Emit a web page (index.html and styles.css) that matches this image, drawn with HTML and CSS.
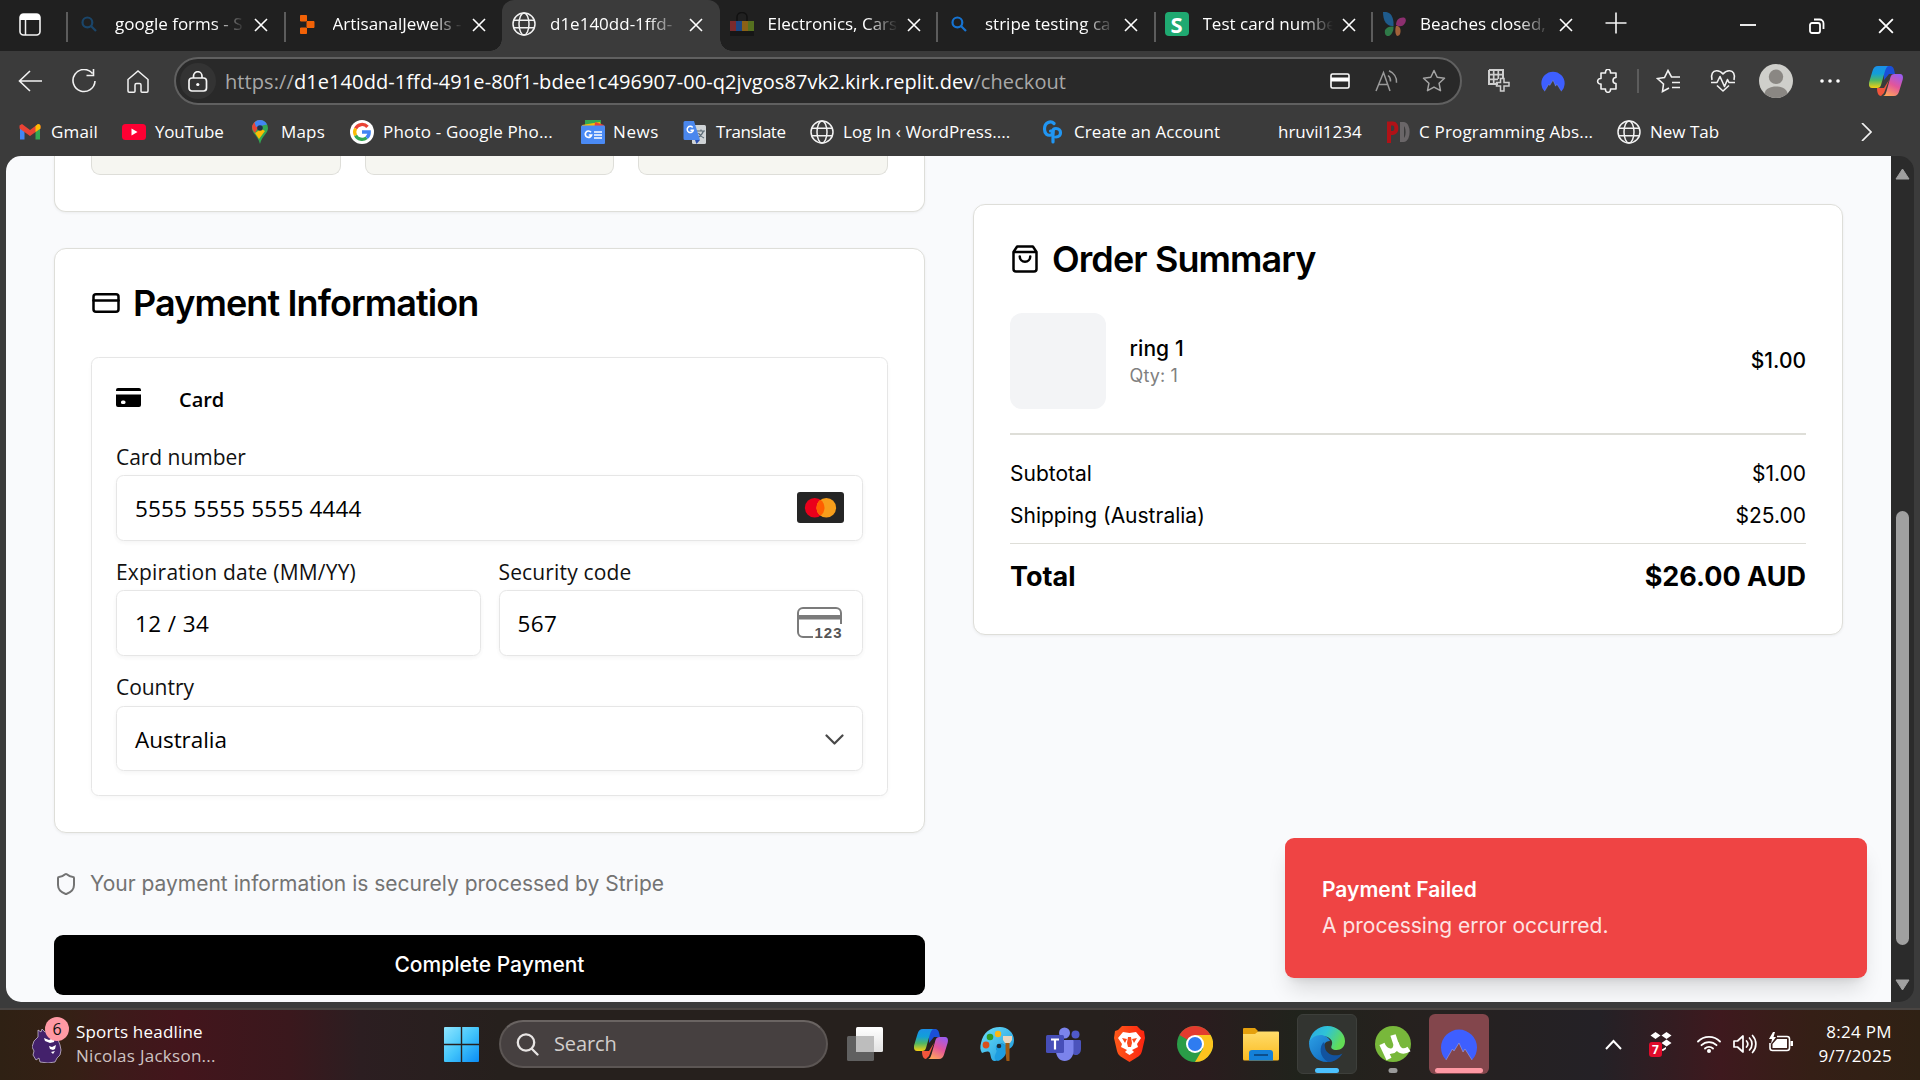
FILE: index.html
```html
<!DOCTYPE html>
<html lang="en">
<head>
<meta charset="utf-8">
<title>Checkout</title>
<link rel="stylesheet" href="styles.css">
</head>
<body>
<svg class="defs" aria-hidden="true">
  <defs>
    <linearGradient id="cp-a" x1="0" y1="0" x2="0" y2="1"><stop offset="0" stop-color="#1b8fe8"/><stop offset=".35" stop-color="#129fd8"/><stop offset=".65" stop-color="#4fb765"/><stop offset="1" stop-color="#f5d011"/></linearGradient>
    <linearGradient id="cp-b" x1=".8" y1="0" x2=".3" y2="1"><stop offset="0" stop-color="#9a5cf0"/><stop offset=".5" stop-color="#e2559b"/><stop offset="1" stop-color="#ffa45c"/></linearGradient>
    <linearGradient id="win" x1="0" y1="0" x2="1" y2="1"><stop offset="0" stop-color="#8fe6ff"/><stop offset=".5" stop-color="#43c5fb"/><stop offset="1" stop-color="#0a8cf5"/></linearGradient>
    <linearGradient id="edge-a" x1="0" y1="0" x2="1" y2=".4"><stop offset="0" stop-color="#2aa7e8"/><stop offset=".5" stop-color="#2fc3d6"/><stop offset="1" stop-color="#62dc55"/></linearGradient>
    <linearGradient id="edge-b" x1="0" y1="0" x2="1" y2="1"><stop offset="0" stop-color="#2c9fe4"/><stop offset="1" stop-color="#0b5fb8"/></linearGradient>
    <linearGradient id="folder" x1="0" y1="0" x2="0" y2="1"><stop offset="0" stop-color="#ffdc6b"/><stop offset="1" stop-color="#fbbb20"/></linearGradient>
    <linearGradient id="pal" x1="0" y1="0" x2="1" y2="1"><stop offset="0" stop-color="#6ee0fa"/><stop offset="1" stop-color="#1796dc"/></linearGradient>
    <linearGradient id="brave" x1="0" y1="0" x2="1" y2="0"><stop offset="0" stop-color="#ff5a1a"/><stop offset="1" stop-color="#fb2410"/></linearGradient>
    <linearGradient id="tv" x1="0" y1="0" x2="0" y2="1"><stop offset="0" stop-color="#fff"/><stop offset="1" stop-color="#e2e2e2"/></linearGradient>
  </defs>
  <symbol id="x" viewBox="0 0 14 14"><path d="M1 1l12 12M13 1L1 13" fill="none" stroke="#fff" stroke-width="1.6"/></symbol>
  <symbol id="globe" viewBox="0 0 24 24"><g fill="none" stroke="#f2f2f2" stroke-width="1.5"><circle cx="12" cy="12" r="11"/><ellipse cx="12" cy="12" rx="5" ry="11"/><path d="M2 8.3h20M2 15.7h20"/></g></symbol>
  <symbol id="find" viewBox="0 0 16 16"><g fill="none" stroke="currentColor" stroke-width="2.2"><circle cx="6.4" cy="6.4" r="4.9"/><path d="M10 10l5 5"/></g></symbol>
  <symbol id="copilot" viewBox="0 0 34 30">
    <path d="M15 0h6c3 0 4 2 5 8h-6l-5 6z" fill="#1b4fd6"/>
    <path d="M8 22h7l5-8-5 13-3 3c-3 0-4-4-4-8z" fill="#f2553c"/>
    <path d="M9 0h11c-2 0-3 2-4 5l-4 14c-.6 2-1.500 3-4 3H3c-3 0-3.500-3-2.800-6L3.500 5C4.500 1.800 6 0 9 0z" fill="url(#cp-a)"/>
    <path d="M25 30H13c3 0 3.600-2 4.600-5L21.500 11c.7-2 1.700-3 4-3H31c3 0 3.400 3 2.600 6l-3.400 11c-1 3.200-2.500 5-5.200 5z" fill="url(#cp-b)"/>
  </symbol>
  <symbol id="peak" viewBox="0 0 36 34"><path d="M5 33A18 18 0 1 1 31 33L24 22l-2 3-4-9-5 8-1.500-2z" fill="#3e5fff"/><path d="M5 33l6.500-11 1.500 2 5-8 4 9 2-3 7 11" fill="none" stroke="#b9c6ff" stroke-width=".8" opacity=".5"/></symbol>
</svg>

<header class="tabs">
  <div class="tab-menu"><svg width="22" height="23" viewBox="0 0 22 23"><rect x="1" y="1" width="20" height="21" rx="3.500" fill="none" stroke="#f2f2f2" stroke-width="1.600"/><path d="M1 7V4a3 3 0 0 1 3-3h14a3 3 0 0 1 3 3v3z" fill="#fff"/><path d="M6.500 7v15" stroke="#f2f2f2" stroke-width="1.500"/></svg></div>
  <div class="tab"><span class="fav dim"><svg width="16" height="16"><use href="#find"/></svg></span><span class="label">google forms - S</span><svg class="close"><use href="#x"/></svg></div>
  <div class="tab"><span class="fav"><svg width="16" height="19" viewBox="0 0 16 19"><path d="M1.500 .5h6v5.500h-6zM8 6.500h7v6H8zM1.500 13h6v5.500h-6z" fill="#f26207" stroke="#f26207" stroke-linejoin="round"/></svg></span><span class="label">ArtisanalJewels -</span><svg class="close"><use href="#x"/></svg></div>
  <div class="tab active"><span class="fav"><svg width="24" height="24"><use href="#globe"/></svg></span><span class="label">d1e140dd-1ffd-</span><svg class="close"><use href="#x"/></svg></div>
  <div class="tab after"><span class="fav"><svg width="24" height="24" viewBox="0 0 24 24"><path d="M7 9V5a5 4.500 0 0 1 10 0v4" fill="none" stroke="#111" stroke-width="1.500"/><path d="M0 9h24v15H0z" fill="#161616"/><path d="M0 9h6v10H0z" fill="#7b2a2c"/><path d="M6 9h6v10H6z" fill="#1c4682"/><path d="M12 9h6v10h-6z" fill="#8a6116"/><path d="M18 9h6v10h-6z" fill="#55701f"/></svg></span><span class="label">Electronics, Cars</span><svg class="close"><use href="#x"/></svg></div>
  <div class="tab"><span class="fav blue"><svg width="16" height="16"><use href="#find"/></svg></span><span class="label">stripe testing ca</span><svg class="close"><use href="#x"/></svg></div>
  <div class="tab"><span class="fav stripe">S</span><span class="label">Test card numbe</span><svg class="close"><use href="#x"/></svg></div>
  <div class="tab"><span class="fav"><svg width="24" height="24" viewBox="0 0 24 24"><path d="M1 0c7-1 11 4 10.500 14C5 15 1 9 1 0z" fill="#1f5b8c"/><path d="M3 18c2-3 5-4 8.500-3.500C12 20 8 25 5 24c-2-1-2.500-3-2-6z" fill="#2f7a48"/><path d="M14 13c0-5 3-8 8-7.500 3 1 2 6-1 8-2 1.300-5 1-7-.5z" fill="#8c2f6f"/><path d="M14 14c3-.5 5 2 4.500 6-.3 3-2 4-3.500 4-2-2-2-7-1-10z" fill="#a2623a"/></svg></span><span class="label">Beaches closed,</span><svg class="close"><use href="#x"/></svg></div>
  <div class="new-tab"><svg width="22" height="22" viewBox="0 0 22 22"><path d="M11 .5v21M.5 11h21" stroke="#f5f5f5" stroke-width="1.600"/></svg></div>
  <div class="window-buttons">
    <svg width="16" height="16" viewBox="0 0 16 16"><path d="M0 7h16" stroke="#fff" stroke-width="1.800"/></svg>
    <svg width="16" height="16" viewBox="0 0 16 16"><g fill="none" stroke="#fff" stroke-width="1.800"><rect x="1" y="5" width="10" height="10" rx="2"/><path d="M5 1.500h5.500a4 4 0 0 1 4 4V11"/></g></svg>
    <svg width="16" height="16"><use href="#x"/></svg>
  </div>
</header>

<nav class="toolbar">
  <div class="nav-buttons">
    <svg width="24" height="22" viewBox="0 0 24 22"><path d="M24 11H1.500M12 1L1.500 11 12 21" fill="none" stroke="#f2f2f2" stroke-width="1.600"/></svg>
    <svg width="24" height="24" viewBox="0 0 24 24"><path d="M20.500 4.500A11 11 0 1 0 23 12M21.500 0v6.500h-7" fill="none" stroke="#f2f2f2" stroke-width="1.600"/></svg>
    <svg width="22" height="23" viewBox="0 0 22 23"><path d="M1 9.500L11 1l10 8.500V21c0 .8-.5 1.200-1.200 1.200H15c-.7 0-1-.4-1-1V15c0-1-.5-1.500-1.500-1.500h-3C8.500 13.500 8 14 8 15v6.200c0 .6-.3 1-1 1H2.200C1.500 22.200 1 21.800 1 21z" fill="none" stroke="#f2f2f2" stroke-width="1.500"/></svg>
  </div>
  <div class="address">
    <span class="lock"><svg width="20" height="21" viewBox="0 0 20 21"><g fill="none" stroke="#f5f5f5" stroke-width="1.700"><rect x="1" y="7" width="17.500" height="13" rx="3"/><path d="M5.500 7V5a4.200 4.200 0 0 1 8.500 0v2"/></g><circle cx="9.800" cy="13.500" r="1.600" fill="#fff"/></svg></span>
    <span class="url"><i>https://</i>d1e140dd-1ffd-491e-80f1-bdee1c496907-00-q2jvgos87vk2.kirk.replit.dev<i>/checkout</i></span>
    <span class="address-icons">
      <svg width="20" height="16" viewBox="0 0 20 16"><rect x="1" y="1" width="18" height="14" rx="1.500" fill="none" stroke="#fff" stroke-width="1.600"/><path d="M1 4.500h18v4H1z" fill="#fff"/></svg>
      <svg width="24" height="22" viewBox="0 0 24 22"><path d="M1 21L8.500 2.500 15 21M3.700 14.500h9M13 5.500c2 1.500 2.800 3.500 2.500 6M14 .8c4.500 2 8 6.500 7.500 12" fill="none" stroke="#9a9a9a" stroke-width="1.500"/></svg>
      <svg width="24" height="24" viewBox="0 0 24 24"><path d="M12 1.500l3.200 6.800 7.300.9-5.400 5.100 1.400 7.400L12 18.100l-6.500 3.600 1.400-7.400L1.500 9.200l7.300-.9z" fill="none" stroke="#a5a5a5" stroke-width="1.500" stroke-linejoin="round"/></svg>
    </span>
  </div>
  <div class="tools">
    <svg width="24" height="24" viewBox="0 0 24 24"><path d="M2 1h14v9M2 1v14h9" fill="none" stroke="#cfcfcf" stroke-width="2"/><path d="M2 5.700h14M2 10.300h9M6.700 1v14M11.300 1v9" stroke="#cfcfcf" stroke-width="1.700"/><path d="M13.500 9.500h3.500v4h5v3.500h-5v5h-3.500v-5h-4v-3.500h4z" fill="none" stroke="#cfcfcf" stroke-width="1.500"/></svg>
    <svg width="24" height="22"><use href="#peak"/></svg>
    <svg width="24" height="24" viewBox="0 0 24 24"><path d="M5 4h4.500c-.5-5 5.500-5 5 0H20v4.500c-4 0-4 6 0 6V20h-5.500c.5 4.500-5.500 4.500-5 0H5v-5c-4.500.5-4.500-6 0-5.500z" fill="none" stroke="#f2f2f2" stroke-width="1.600" stroke-linejoin="round"/></svg>
    <span class="tool-rule"></span>
    <svg width="25" height="24" viewBox="0 0 25 24"><path d="M13 19l-6.500 3.500 1-7.500L1.500 9.500l7-1L12 1.500l3.500 6.500H24M16 13.500h8M16 18.500h8" fill="none" stroke="#f2f2f2" stroke-width="1.600"/></svg>
    <svg width="26" height="24" viewBox="0 0 26 24"><path d="M2 11C.5 5 3 2 6.500 1.800 9 1.700 11 2.500 13 5c2-2.500 4-3.300 6.500-3.200C23 2 25.500 5 24 11M7 16.500l6 5.500 6-5.500M1 13.500h6l3-6 4.500 10 3-7 1.500 3h6" fill="none" stroke="#f2f2f2" stroke-width="1.600" stroke-linejoin="round"/></svg>
    <svg width="34" height="34" viewBox="0 0 34 34"><circle cx="17" cy="17" r="17" fill="#cfcfcb"/><circle cx="17" cy="12.800" r="7.200" fill="#8a8783"/><path d="M5.500 29.500c1-5 6-7 11.500-7s10.500 2 11.500 7a17 17 0 0 1-23 0z" fill="#8a8783"/></svg>
    <svg width="20" height="4" viewBox="0 0 20 4"><g fill="#fff"><circle cx="2" cy="2" r="1.800"/><circle cx="10" cy="2" r="1.800"/><circle cx="18" cy="2" r="1.800"/></g></svg>
    <svg width="34" height="30"><use href="#copilot"/></svg>
  </div>
</nav>

<nav class="bookmarks">
  <a><svg viewBox="0 0 24 24"><path d="M2 6v13.500h4.500V9z" fill="#4285f4"/><path d="M22 6v13.500h-4.500V9z" fill="#34a853"/><path d="M1.500 5.500L4 4l8 6 8-6 2.500 1.500v3L12 16 1.500 8.500z" fill="#ea4335"/><path d="M17.500 6L20 4c1.500 0 2.500.8 2.500 2.500v2L17.500 12z" fill="#fbbc04"/></svg>Gmail</a>
  <a class="tight"><svg viewBox="0 0 24 24"><rect y="4" width="24" height="16" rx="3.500" fill="#ff0033"/><path d="M9.500 8.500l6 3.500-6 3.500z" fill="#fff"/></svg>YouTube</a>
  <a><svg viewBox="0 0 24 24"><path d="M12 0a8 8 0 0 1 8 8.300c0 5-6 7.700-8 15.700-2-8-8-10.700-8-15.700A8 8 0 0 1 12 0z" fill="#34a853"/><path d="M4.500 5A8 8 0 0 1 14 .4L7 13C5 11 3.300 8 4.500 5z" fill="#ea4335"/><path d="M12 0a8 8 0 0 1 7 4.500L8 7 6.500 2.500C8 .8 10 0 12 0z" fill="#4285f4"/><path d="M7 13c2-1 4.500-3 5-5l5 3-6 8z" fill="#fbbc04"/><circle cx="12" cy="8" r="2.800" fill="#20304a"/></svg>Maps</a>
  <a><svg viewBox="0 0 24 24"><circle cx="12" cy="12" r="12" fill="#fff"/><g fill="none" stroke-width="3.300"><path d="M17.500 6.800A7.300 7.300 0 0 0 5.600 8.500" stroke="#ea4335"/><path d="M5.600 8.500a7.300 7.300 0 0 0 0 7" stroke="#fbbc04"/><path d="M5.600 15.500A7.300 7.300 0 0 0 16.600 17.800" stroke="#34a853"/><path d="M16.600 17.800A7 7 0 0 0 19.200 12H12" stroke="#4285f4"/></g></svg>Photo - Google Pho...</a>
  <a class="wide"><svg viewBox="0 0 24 24"><path d="M4 0h16v8H4z" fill="#34a853"/><path d="M1 5l18-3 2 8H2z" fill="#fbbc04"/><path d="M14 2l9 3-2 6h-8z" fill="#ea4335"/><rect y="5.500" width="24" height="18.500" rx="1" fill="#4a8af4"/><path d="M10 12.200a3.200 3.200 0 1 0 .6 2.800H7.800M13 12h8M13 15h8M13 18h8" fill="none" stroke="#fff" stroke-width="1.700"/></svg>News</a>
  <a class="tighter"><svg viewBox="0 0 24 24"><rect x="9" y="5" width="14" height="19" rx="1.500" fill="#cfd3d6"/><path d="M14 11h8M18 9.500V11M20.500 11c-1 3-3 5-5.500 6.500M15.500 13c1 2 3 4 5.500 5" fill="none" stroke="#5b6a75" stroke-width="1.200"/><path d="M2 1h9l6 19H2a1.500 1.500 0 0 1-1.500-1.500v-16A1.500 1.500 0 0 1 2 1z" fill="#4a87ee"/><path d="M12 20h5l-3.500 4z" fill="#2a4fb0"/><path d="M9.700 7.500a3.100 3.100 0 1 0 .6 2.700H7.500" fill="none" stroke="#fff" stroke-width="1.500"/></svg>Translate</a>
  <a class="login"><svg viewBox="0 0 24 24"><use href="#globe"/></svg>Log In ‹ WordPress....</a>
  <a class="login"><svg viewBox="0 0 24 24"><g fill="none" stroke="#2196f3" stroke-width="3.200" stroke-linecap="round"><path d="M13 3.500C10 .5 3.500 2 3.500 9c0 5 3 7 6.500 6 1.500-.6 2-1.500 2-4H9.500"/><path d="M12 22V11c0-2 1-2.500 3-2.500 6 0 6 8.500 0 8.500"/></g></svg>Create an Account</a>
  <a class="plain user"><svg viewBox="0 0 24 24"></svg>hruvil1234</a>
  <a><svg viewBox="0 0 24 24"><path d="M3 23V3.500h4c4.500 0 4.500 9.500 0 9.500H3" fill="none" stroke="#b01217" stroke-width="4"/><path d="M16 4v16h1.500c5.500 0 5.500-16 0-16z" fill="none" stroke="#6a6668" stroke-width="4"/></svg>C Programming Abs...</a>
  <a class="plain"><svg viewBox="0 0 24 24"><use href="#globe"/></svg>New Tab</a>
  <svg class="more" viewBox="0 0 11 18"><path d="M1 0l9 9-9 9" fill="none" stroke="#f2f2f2" stroke-width="1.700"/></svg>
</nav>

<div class="viewport">
  <main class="page">
    <div class="column">
      <section class="card partial"><span></span><span></span><span></span></section>
      <section class="card">
        <h2><svg width="30" height="30" viewBox="0 0 24 24" class="line"><rect x="2" y="5" width="20" height="14" rx="2"/><path d="M2 10h20"/></svg>Payment Information</h2>
        <div class="stripe-form">
          <div class="method"><svg width="25" height="19" viewBox="0 0 25 19"><path d="M2 0h21a2 2 0 0 1 2 2v1H0V2a2 2 0 0 1 2-2zM0 6.500h25V17a2 2 0 0 1-2 2H2a2 2 0 0 1-2-2z"/><rect x="5" y="12.500" width="4.500" height="3.500" rx="1.600" fill="#fff"/></svg>Card</div>
          <div class="field"><label>Card number</label><div class="input">5555 5555 5555 4444
            <svg width="47" height="31" viewBox="0 0 47 31"><rect width="47" height="31" rx="3" fill="#252525"/><circle cx="17.700" cy="15.700" r="9.800" fill="#eb001b"/><circle cx="29.300" cy="15.700" r="9.800" fill="#f79e1b"/><path d="M23.500 7.800a9.800 9.800 0 0 1 0 15.800 9.800 9.800 0 0 1 0-15.800z" fill="#ff5f00"/></svg></div></div>
          <div class="pair">
            <div class="field exp"><label>Expiration date (MM/YY)</label><div class="input">12 / 34</div></div>
            <div class="field security"><label>Security code</label><div class="input code">567
              <svg width="47" height="32" viewBox="0 0 47 32"><path d="M44 17V6a5 5 0 0 0-5-5H6a5 5 0 0 0-5 5v19a5 5 0 0 0 5 5h10" fill="none" stroke="#7b7b7b" stroke-width="2"/><path d="M1 8h44v4.500H1z" fill="#7b7b7b"/><text x="17.500" y="31">123</text></svg></div></div>
          </div>
          <div class="field country"><label>Country</label><div class="input select">Australia
            <svg width="19" height="12" viewBox="0 0 19 12"><path d="M1.500 1.500l8 8 8-8" fill="none" stroke="#484848" stroke-width="2.200" stroke-linecap="round" stroke-linejoin="round"/></svg></div></div>
        </div>
      </section>
      <p class="secure"><svg width="24" height="24" viewBox="0 0 24 24" class="line"><path d="M20 13c0 5-3.500 7.500-7.660 8.950a1 1 0 0 1-.67-.01C7.500 20.500 4 18 4 13V6a1 1 0 0 1 1-1c2 0 4.500-1.200 6.240-2.720a1.170 1.170 0 0 1 1.520 0C14.510 3.810 17 5 19 5a1 1 0 0 1 1 1z"/></svg>Your payment information is securely processed by Stripe</p>
      <button class="pay">Complete Payment</button>
    </div>
    <aside class="card order">
      <h2><svg width="30" height="30" viewBox="0 0 24 24" class="line"><path d="M2.800 6.300L5.700 2h12.600l2.900 4.300V20a2 2 0 0 1-2 2H4.800a2 2 0 0 1-2-2zM2.800 6.300h18.400M16.200 10a4.200 4.200 0 0 1-8.400 0"/></svg>Order Summary</h2>
      <div class="item"><span class="thumb"></span><div><p class="name">ring 1</p><p class="qty">Qty: 1</p></div><b>$1.00</b></div>
      <div class="sums">
        <div><span>Subtotal</span><span>$1.00</span></div>
        <div><span>Shipping (Australia)</span><span>$25.00</span></div>
        <div class="total"><span>Total</span><span>$26.00 AUD</span></div>
      </div>
    </aside>
    <div class="toast"><strong>Payment Failed</strong><p>A processing error occurred.</p></div>
  </main>
  <div class="scrollbar">
    <svg width="15" height="12" viewBox="0 0 15 12"><path d="M7.500 1L14 11H1z" fill="#a0a0a0" stroke="#a0a0a0" stroke-linejoin="round"/></svg>
    <span class="thumb-bar"></span>
    <svg width="15" height="12" viewBox="0 0 15 12"><path d="M7.500 11L14 1H1z" fill="#a0a0a0" stroke="#a0a0a0" stroke-linejoin="round"/></svg>
  </div>
</div>

<footer class="taskbar">
  <div class="widget">
    <span class="lion"><svg width="30" height="38" viewBox="0 0 30 38"><path d="M6 5l3 2 1-3 3 3 6-1 6 6 3 8 1 5-1 5-3 3-2 4-7 1-8-1-1-4-3 2-3-5 1-4-2-4 2-6 4-4z" fill="#43216b" stroke="#d8cfe2" stroke-width=".7"/><path d="M12 13l5 2 6-3-1 5-4 1-5-2z" fill="#fff"/><path d="M17 21l3 1 4-2-1 4-2 1-3-1z" fill="#fff"/><path d="M19 27l4-1-2 3z" fill="#fff"/></svg><em>6</em></span>
    <div class="news"><b>Sports headline</b><span>Nicolas Jackson...</span></div>
  </div>
  <div class="apps">
    <span class="app"><svg width="35" height="35" viewBox="0 0 35 35"><path d="M1 0h15.800v16.800H0V1a1 1 0 0 1 1-1zM18.200 0H34a1 1 0 0 1 1 1v15.800H18.200zM0 18.200h16.800V35H1a1 1 0 0 1-1-1zM18.200 18.200H35V34a1 1 0 0 1-1 1H18.200z" fill="url(#win)"/></svg></span>
    <div class="search"><svg width="23" height="23" viewBox="0 0 23 23"><g fill="none" stroke="#e8e5e4" stroke-width="2.300" stroke-linecap="round"><circle cx="10" cy="9.500" r="8.200"/><path d="M16 16l5.500 5.500"/></g></svg>Search</div>
    <span class="app"><svg width="36" height="34" viewBox="0 0 36 34"><rect y="9" width="27" height="25" rx="1.500" fill="#606060"/><rect x="9" width="27" height="25" rx="1.500" fill="url(#tv)"/><path d="M9 9h18v16H9z" fill="#bdbdbd"/></svg></span>
    <span class="app"><svg width="34" height="30"><use href="#copilot"/></svg></span>
    <span class="app"><svg width="34" height="34" viewBox="0 0 34 34"><path d="M20 0c8 0 14 6 14 13 0 6-3 9-7 9-1-4-5-7-9-4-5 3 2 7 1 11 0 3-2 5-5 5-3-1-3-4-4-8-2-3-5-1-8 0C0 23 0 20 1 16 3 6 10 0 20 0z" fill="url(#pal)"/><path d="M17 18c5-3 11 0 10 5s-4 9-9 11c-4-1-4-4-2-8 2-3-2-5 1-8z" fill="#1e9de0"/><circle cx="19" cy="19" r="2.300" fill="#1b2a35"/><circle cx="6" cy="18" r="3.400" fill="#d94f1c"/><circle cx="10" cy="10" r="3.300" fill="#2f9e2b"/><circle cx="18" cy="7" r="3.200" fill="#fcb813"/><path d="M25.500 16h4v18h-3c-1-6-1-12-1-18z" fill="#a05a12"/><path d="M23 9h9v4l-2 3h-5l-2-3z" fill="#e8d5bd"/></svg></span>
    <span class="app"><svg width="35" height="34" viewBox="0 0 35 34"><circle cx="18.500" cy="6" r="5.500" fill="#7b83eb"/><circle cx="29.500" cy="7.500" r="4" fill="#5059c9"/><path d="M26 13h7.500c1 0 1.500.5 1.500 1.500V22c0 4-3 6.500-6 6l-3-1z" fill="#4b53bc"/><path d="M10 13h16.500c.8 0 1 .4 1 1.200V24c0 6-4 10-8.800 10S10 30 10 24z" fill="#7b83eb"/><rect y="8" width="18" height="18" rx="1.500" fill="#464eb8"/><path d="M5 12.500h8M9 12.500v10" stroke="#fff" stroke-width="2.200"/></svg></span>
    <span class="app"><svg width="31" height="36" viewBox="0 0 31 36"><path d="M8 0h15l4 4 3 1 1 7-3 13c-1 4-3 5-6 7l-6.500 4L9 32c-3-2-5-3-6-7L0 12l1-7 3-1z" fill="url(#brave)"/><path d="M9 6l6.500 1L22 6l5 6-4 6 1 3-4 2-2 1 2 2-4.500 3-4.500-3 2-2-2-1-4-2 1-3-4-6z" fill="#fff"/><path d="M8 12l5 1-2 4zM23 12l-5 1 2 4zM14 11h3l1 6-1 4h-3l-1-4z" fill="#fb4a1c"/></svg></span>
    <span class="app"><svg width="36" height="36" viewBox="0 0 36 36"><circle cx="18" cy="18" r="18" fill="#2a9d48"/><path d="M18 18L2.400 9A18 18 0 0 1 33.600 9z" fill="#e33b2e"/><path d="M18 9h15.600A18 18 0 0 1 18 36l8-13.500z" fill="#fcc31e"/><circle cx="18" cy="18" r="9" fill="#fff"/><circle cx="18" cy="18" r="7" fill="#2f7cf0"/></svg></span>
    <span class="app"><svg width="36" height="34" viewBox="0 0 36 34"><path d="M1 1h11l3 3-2 4H0V2a1 1 0 0 1 1-1z" fill="#e5a00d"/><path d="M0 7h12l3-2.500h20a1 1 0 0 1 1 1V32a1.500 1.500 0 0 1-1.500 1.500h-33A1.500 1.500 0 0 1 0 32z" fill="url(#folder)"/><path d="M6 33.500V26a3 3 0 0 1 3-3h18a3 3 0 0 1 3 3v7.500z" fill="#1480d8"/><path d="M11 28h14" stroke="#0c4e8c" stroke-width="2"/></svg></span>
    <span class="app open"><svg width="36" height="36" viewBox="0 0 36 36"><path d="M0 17C1 7 9 0 18.500 0 28 0 36 7 36 15c0 6-4 9-8.500 9-4 0-6-2-5-4 3-6-4-11-10-9.500C6 11.500 2 14 0 17z" fill="url(#edge-a)"/><path d="M0 17c2-6 9-9 14.500-7.500 4 1 6 3.500 6.500 5.500-5 0-8 5-6 10 2 5 8 8 14 6.500-3 3-7 4.500-11 4.500C8 36 0 28 0 17z" fill="url(#edge-b)"/><path d="M15 16c-5 4-5 15 4 20 6 0 11-3 14.500-8.500-7 4-15 1-17-4-1-3-.5-5-1.500-7.500z" fill="#12539f"/></svg></span>
    <span class="app running"><svg width="36" height="36" viewBox="0 0 36 36"><circle cx="18" cy="18" r="18" fill="#78b83b"/><path d="M7 18l7 15M7 18c4 10 15 9 14 0l-3-9M21 17c2 8 7 10 13 6" fill="none" stroke="#fff" stroke-width="5.500"/></svg></span>
    <span class="app alert"><svg width="36" height="34"><use href="#peak"/></svg></span>
  </div>
  <div class="tray">
    <svg width="17" height="11" viewBox="0 0 17 11"><path d="M1 10l7.500-8L16 10" fill="none" stroke="#fff" stroke-width="2"/></svg>
    <span class="box"><svg width="22" height="24" viewBox="0 0 22 24"><path d="M5.500 0l5 3.500-5 3.500-5-3.500zM16.500 0l5 3.500-5 3.500-5-3.500zM16.500 7.500l5 3.500-5 3.500-5-3.500zM11 18l5-3v2l-3 2z" fill="#fff"/></svg><em>7</em></span>
    <svg class="wifi" width="24" height="18" viewBox="0 0 24 18"><g fill="none" stroke="#fff" stroke-width="1.800" stroke-linecap="round"><path d="M1 6.500a15.500 15.500 0 0 1 22 0M4.500 10.200a10.600 10.600 0 0 1 15 0M8 13.500a5.700 5.700 0 0 1 8 0"/></g><circle cx="12" cy="16" r="2" fill="#fff"/></svg>
    <svg class="vol" width="24" height="20" viewBox="0 0 24 20"><g fill="none" stroke="#fff" stroke-width="1.700" stroke-linejoin="round" stroke-linecap="round"><path d="M1 7h3.500L10 2v16l-5.500-5H1zM13.500 7a4.500 4.500 0 0 1 0 6M16.500 4a8.500 8.500 0 0 1 0 12M19.500 1.500a12.500 12.500 0 0 1 0 17"/></g></svg>
    <svg class="bat" width="24" height="20" viewBox="0 0 24 20"><path d="M8 4.500h10a2.500 2.500 0 0 1 2.500 2.500v9a2.500 2.500 0 0 1-2.500 2.500H3.500A2.500 2.500 0 0 1 1 16v-5" fill="none" stroke="#fff" stroke-width="1.600"/><path d="M8 7h10v9H3.500v-4zM21.500 9h2.500v5h-2.500zM4 0L0 7h3L2 12l5-7H4.500L6 0z" fill="#fff"/></svg>
    <div class="clock"><span>8:24 PM</span><span>9/7/2025</span></div>
  </div>
</footer>
</body>
</html>
```
FILE: styles.css
```css
* { box-sizing: border-box; margin: 0; padding: 0; }
body {
  width: 1920px; height: 1080px; overflow: hidden;
  display: flex; flex-direction: column;
  background: #3b3b3b; color: #fff;
  font: 17px/24px "Open Sans", "Noto Sans", sans-serif;
}
svg { display: block; flex: none; }
i, em { font-style: normal; }
.defs { position: absolute; width: 0; height: 0; }

/* tab strip */
.tabs { display: flex; height: 51px; flex: none; background: #202020; }
.tab-menu { width: 67px; padding: 13px 0 0 19px; }
.tab { position: relative; width: 217.500px; height: 51px; display: flex; align-items: center; padding: 0 0 3px 10px; }
.tab::before { content: ""; position: absolute; left: -1px; top: 12px; width: 2px; height: 30px; background: #5c5c5c; }
.tab.active::before, .tab.after::before { display: none; }
.tab.active { background: #3b3b3b; border-radius: 12px 12px 0 0; }
.tab.active::after { content: ""; position: absolute; left: -12px; right: -12px; bottom: 0; height: 12px;
  background: radial-gradient(circle at 0 0, transparent 11.500px, #3b3b3b 12px) left/12px 12px no-repeat,
    radial-gradient(circle at 100% 0, transparent 11.500px, #3b3b3b 12px) right/12px 12px no-repeat; }
.fav { width: 24px; height: 24px; display: grid; place-items: center; margin-right: 14px; flex: none; }
.fav.dim { color: #1a4569; }
.fav.blue { color: #1673d1; }
.fav.stripe { background: #1fa971; border-radius: 4px; font: 700 22px/24px "Open Sans", sans-serif; }
.label { width: 130px; white-space: nowrap;
  -webkit-mask-image: linear-gradient(90deg, #000 98px, transparent 130px);
  mask-image: linear-gradient(90deg, #000 98px, transparent 130px); }
.close { width: 14px; height: 14px; margin: 2px 0 0 9px; }
.new-tab { padding: 12px 0 0 15px; flex: 1; }
.window-buttons { display: flex; gap: 53px; padding: 18px 26px 0 0; }

/* toolbar */
.toolbar { display: flex; align-items: center; height: 60px; flex: none; }
.nav-buttons { display: flex; align-items: center; width: 174px; padding-left: 18px; gap: 30px; }
.nav-buttons svg:last-child { margin-left: 1px; }
.address { width: 1288px; height: 48px; border: 2px solid #606060; border-radius: 24px; background: #292929; display: flex; align-items: center; padding-left: 4px; }
.lock { width: 36px; height: 36px; border-radius: 50%; background: #333; display: grid; place-items: center; }
.url { margin-left: 9px; padding-top: 1px; flex: 1; white-space: nowrap; font-size: 20px; letter-spacing: .085px; color: #fff; }
.url i { color: #a8a8a8; }
.address-icons { display: flex; align-items: center; gap: 23px; padding-right: 14px; }
.address-icons svg:first-child { margin-right: 2px; }
.tools { display: flex; align-items: center; padding-left: 25px; gap: 30px; flex: 1; }
.tools svg:nth-child(3) { margin-left: 1px; }
.tool-rule { width: 2px; height: 24px; background: #5c5c5c; margin: 0 -13px 0 -13px; }
.tools svg:nth-child(5) { margin-left: 0; }
.tools svg:nth-child(6) { margin-left: -1px; }
.tools svg:nth-child(7) { margin-left: -7px; }
.tools svg:nth-child(8) { margin-left: -3px; }
.tools svg:nth-child(9) { margin-left: -1px; }

/* bookmarks */
.bookmarks { display: grid; flex: none; height: 45px; padding: 0 48px 4px 18px; align-items: center; white-space: nowrap; letter-spacing: .18px;
  grid-template-columns: 104px 126px 102px 231px 102px 127px 231px 204px 141px 231px 1fr 11px; }
.bookmarks a { display: flex; align-items: center; gap: 9px; }
.bookmarks a svg { width: 24px; height: 24px; }
.bookmarks .more { width: 11px; height: 18px; }
.bookmarks .tight { letter-spacing: -.2px; }
.bookmarks .tighter { letter-spacing: -.45px; }
.bookmarks .wide { gap: 8px; letter-spacing: .6px; }
.bookmarks .plain { letter-spacing: 0; }
.bookmarks .login { letter-spacing: .06px; }

/* page viewport */
.viewport { display: flex; height: 846px; flex: none; margin: 0 6px; border-radius: 15px; overflow: hidden; background: #2b2b2b; }
.page { position: relative; width: 1885px; height: 846px; overflow: hidden; display: flex; align-items: flex-start; gap: 48px; padding-left: 48px; background: #f9fafc; color: #000; font: 21px/30px Inter, sans-serif; }
.column { width: 871px; display: flex; flex-direction: column; gap: 36px; }
.card { background: #fff; border: 1px solid #deded9; border-radius: 12px; padding: 36px; box-shadow: 0 1px 3px rgba(0,0,0,.06); }
.card.partial { height: 56px; border-top: 0; border-radius: 0 0 12px 12px; padding-top: 0; display: flex; gap: 24px; }
.partial span { flex: 1; height: 19px; background: #f6f6f1; border: 1px solid #deded9; border-top: 0; border-radius: 0 0 9px 9px; }
h2 { display: flex; align-items: center; gap: 12px; height: 36px; margin-bottom: 36px; font-size: 36px; line-height: 36px; font-weight: 600; letter-spacing: -.025em; }
.line { fill: none; stroke: currentColor; stroke-width: 2; stroke-linecap: round; stroke-linejoin: round; }
.stripe-form { height: 439px; border: 1px solid #e6e6e6; border-radius: 7.500px; padding: 24px; box-shadow: 0 2px 4px rgba(0,0,0,.03); font: 21px/28px "Open Sans", "Noto Sans", sans-serif; letter-spacing: -.04px; }
.method { display: flex; gap: 38px; height: 61px; padding-top: 6px; font-size: 20px; line-height: 24px; font-weight: 600; }
.field { display: flex; flex-direction: column; gap: 4px; }
.field label { height: 28px; color: #111; }
.field.exp label { letter-spacing: .2px; }
.field.security label { letter-spacing: .15px; }
.field .input { height: 66px; border: 1px solid #e6e6e6; border-radius: 7.500px; padding: 1px 18px 0; box-shadow: 0 2px 4px rgba(0,0,0,.03), 0 1px 6px rgba(0,0,0,.02); display: flex; align-items: center; justify-content: space-between; font-size: 22.500px; letter-spacing: .17px; }
.field .input svg { margin-top: -2px; }
.field.exp .input, .field .input.code { letter-spacing: .4px; }
.field .input.select { height: 65px; padding-top: 2px; letter-spacing: -.04px; }
.field .input.select svg { margin: 0; }
.pair { display: grid; grid-template-columns: 1fr 1fr; gap: 18px; margin: 17px 0; }
.country { gap: 5px; }
.code text { font: 700 15px "Liberation Sans", sans-serif; fill: #555; letter-spacing: 1px; }
.secure { display: flex; align-items: center; gap: 12px; height: 66px; margin: -18px 0; color: #737373; }
.pay { height: 60px; border: 0; border-radius: 9px; background: #000; color: #fff; font: 500 21px/30px Inter, sans-serif; }
.order { width: 870px; height: 431px; margin-top: 48px; }
.item { display: flex; align-items: center; gap: 23.500px; padding-bottom: 24px; border-bottom: 2px solid #deded8; }
.item b { margin-left: auto; font-weight: 500; }
.thumb { width: 96px; height: 96px; border-radius: 12px; background: #f3f4f6; }
.name { font-weight: 500; line-height: 29px; letter-spacing: .1px; }
.qty { font-size: 18px; line-height: 25px; color: #808080; letter-spacing: .15px; }
.sums { display: flex; flex-direction: column; gap: 12px; padding-top: 24px; }
.sums div { display: flex; justify-content: space-between; }
.sums .total { border-top: 1px solid #deded8; padding-top: 12px; font-size: 27px; line-height: 42px; font-weight: 700; }
.toast { position: absolute; left: 1279px; top: 682px; width: 582px; height: 140px; padding: 37px; border-radius: 9px; background: #ef4444; color: #fff; box-shadow: 0 15px 22px -5px rgba(0,0,0,.14), 0 6px 9px -6px rgba(0,0,0,.12); }
.toast strong { display: block; font-weight: 600; }
.toast p { margin-top: 6px; color: #fde3e3; }
.scrollbar { width: 23px; display: flex; flex-direction: column; align-items: center; justify-content: space-between; padding: 12px 0 11px; }
.thumb-bar { width: 13px; height: 434px; border-radius: 7px; background: #a0a0a0; margin-top: 297px; }

/* taskbar */
.taskbar { position: relative; display: flex; align-items: center; height: 72px; flex: none; margin-top: 6px; padding-bottom: 2px; border-top: 2px solid #4a4542;
  background: linear-gradient(90deg, #2f2114 0, #352015 70px, #3d1a1a 120px, #43151c 180px, #3a181d 290px, #2c1e21 360px, #26201d 500px, #26201d 1100px, #2a1c1e 1200px, #20231c 1300px, #26211e 1400px, #242126 1600px, #3e191e 1720px, #351f16 1810px, #2f2114 1920px); }
.widget { display: flex; width: 431px; padding-left: 32px; gap: 14px; align-items: center; }
.lion { position: relative; width: 30px; height: 38px; }
.lion em { position: absolute; left: 13px; top: -8px; width: 24px; height: 24px; border-radius: 50%; background: #ff99a4; color: #111; text-align: center; font-size: 16px; }
.news { display: flex; flex-direction: column; letter-spacing: .2px; }
.news b { font-weight: 400; }
.news span { color: #cfc4c3; letter-spacing: .27px; }
.apps { display: flex; gap: 6px; align-items: center; }
.app { position: relative; width: 60px; height: 60px; border-radius: 6px; display: grid; place-items: center; }
.search { width: 329px; height: 48px; margin: 0 1px 0 2px; border: 2px solid #5c5654; border-radius: 24px; border-top-color: #6a6462; background: #464040; display: flex; align-items: center; gap: 15px; padding-left: 15px; font-size: 20px; letter-spacing: -.1px; color: #d2cecc; }
.open { background: #323430; border: 1px solid #3d3f3b; }
.alert { background: #83464c; }
.open::after, .running::after, .alert::after { content: ""; position: absolute; bottom: 1px; left: 50%; height: 5px; border-radius: 3px; transform: translateX(-50%); }
.open::after { width: 24px; background: #4cc2ff; bottom: 0; }
.running::after { width: 9px; background: #9a9a9a; }
.alert::after { width: 48px; background: #ff99a4; }
.tray { display: flex; align-items: center; flex: 1; padding: 0 28px 0 116px; }
.box { position: relative; margin: 0 25px 0 28px; }
.box em { position: absolute; left: -1px; top: 10px; width: 13px; height: 15px; border-radius: 3px; background: #e00b2b; font: 700 12px/15px "Open Sans", sans-serif; text-align: center; }
.vol { margin-left: 12px; }
.bat { margin-left: 12px; margin-top: -4px; }
.clock { margin-left: auto; display: flex; flex-direction: column; text-align: right; letter-spacing: .33px; }
```
